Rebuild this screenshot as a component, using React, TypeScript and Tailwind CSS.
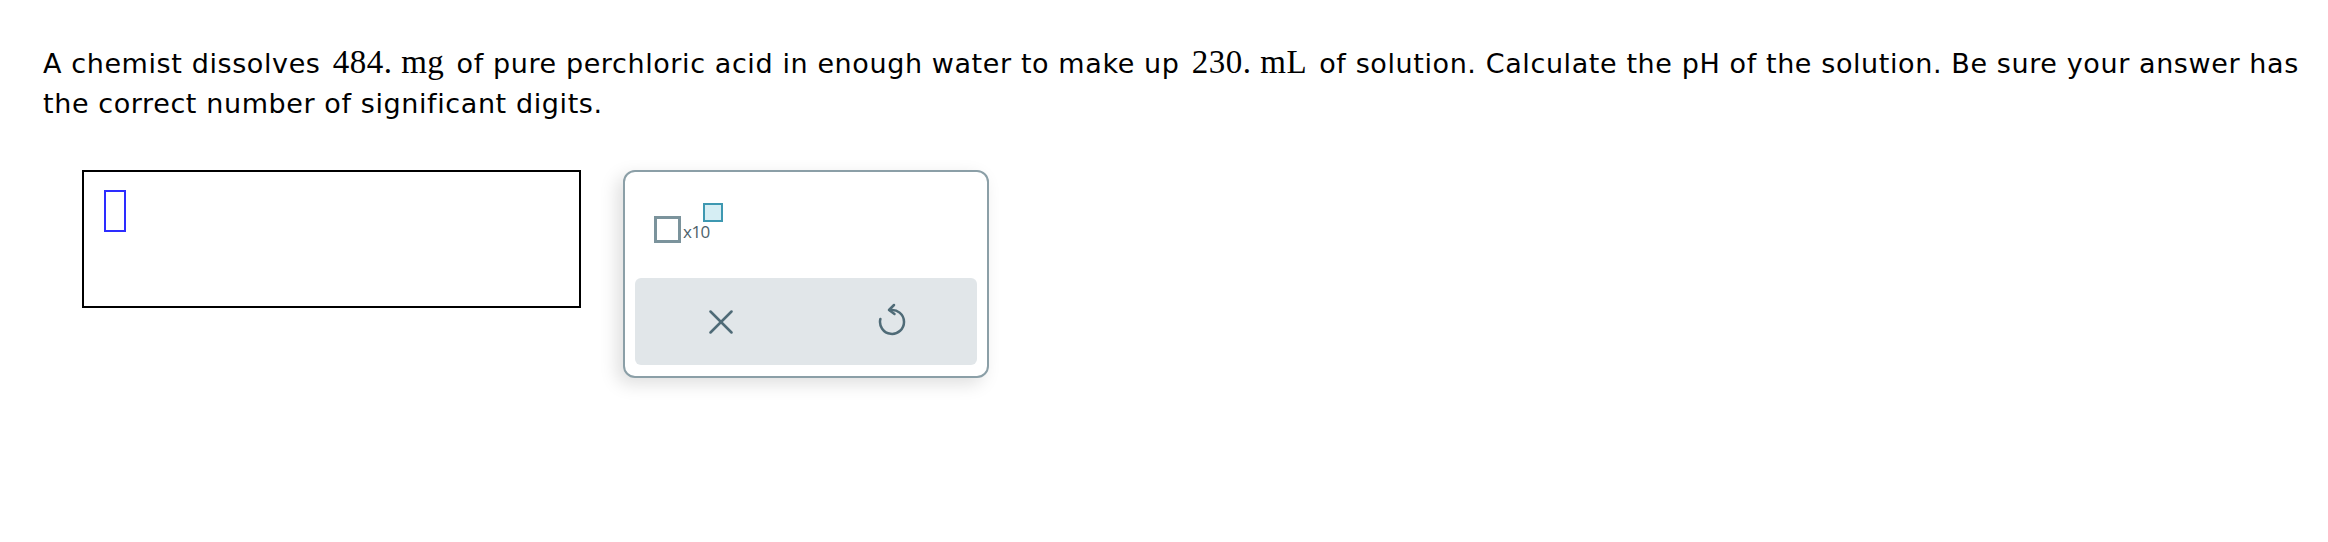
import React from "react"

function UndoIcon() {
    return (
        <svg width="28" height="34" viewBox="0 0 28 34" fill="none" stroke="#4f6b77" strokeWidth="2.5" strokeLinecap="round" strokeLinejoin="round">
            <path d="M12 8.1 A12 12 0 1 1 2.4 16.9" />
            <path d="M16 3 L11 8 L16.5 12" />
        </svg>
    )
}

function CloseIcon() {
    return (
        <svg width="24" height="24" viewBox="0 0 24 24" fill="none" stroke="#4f6b77" strokeWidth="2.5" strokeLinecap="round">
            <path d="M1.5 1.5 L22.5 22.5" />
            <path d="M22.5 1.5 L1.5 22.5" />
        </svg>
    )
}

export default function App() {
    return (
        <main className="min-h-[542px] bg-white text-black">
            <p className="pl-[43px] pr-[16px] pt-[44px] font-['DejaVu_Sans',sans-serif] text-[27px] leading-[40px] tracking-[0.6px]">
                A chemist dissolves{" "}
                <span className="mx-[3px] font-['Liberation_Serif',serif] text-[33px] leading-none tracking-[0.5px]">484.&nbsp;mg</span> of pure
                perchloric acid in enough water to make up{" "}
                <span className="mx-[3px] font-['Liberation_Serif',serif] text-[33px] leading-none tracking-[0.5px]">230.&nbsp;mL</span> of solution.
                Calculate the pH of the solution. Be sure your answer has the correct number of
                significant digits.
            </p>

            <div className="ml-[82px] mt-[46px] flex items-start gap-[42px]">
                <div className="h-[138px] w-[499px] border-2 border-black pl-[20px] pt-[18px]">
                    <div className="h-[42px] w-[22px] border-2 border-[#2d2dff]" />
                </div>

                <div className="flex h-[208px] w-[366px] flex-col rounded-[12px] border-2 border-[#8b9fa7] bg-white px-[10px] pb-[11px] shadow-[-6px_6px_18px_rgba(0,0,0,0.13)]">
                    <div className="flex-1 pl-[19px] pt-[31px]">
                        <div className="flex items-start font-['Open_Sans',sans-serif]">
                            <div className="mt-[13px] h-[27px] w-[27px] border-[3px] border-[#7b939c]" />
                            <span className="ml-[2px] mt-[20px] text-[17px] leading-none tracking-[-0.5px] text-[#4d626b]">
                                x10
                            </span>
                            <div className="ml-[-7px] h-[19px] w-[20px] border-[2.5px] border-[#3e98b1] bg-[#d6eef4]" />
                        </div>
                    </div>
                    <div className="flex h-[87px] rounded-[6px] bg-[#e1e6e9]">
                        <button className="flex flex-1 items-center justify-center">
                            <CloseIcon />
                        </button>
                        <button className="flex flex-1 items-center justify-center pb-[6px]">
                            <UndoIcon />
                        </button>
                    </div>
                </div>
            </div>
        </main>
    )
}
